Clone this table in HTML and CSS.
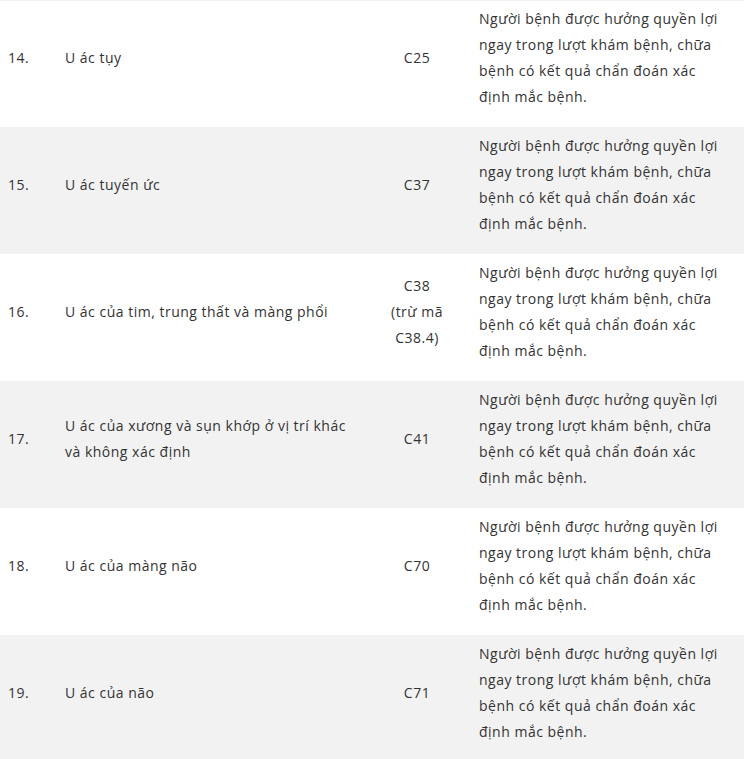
FILE: index.html
```html
<!DOCTYPE html>
<html lang="vi">
<head>
<meta charset="utf-8">
<link rel="stylesheet" href="styles.css">
</head>
<body>
<table class="tbl">
  <colgroup>
    <col class="c-num"><col class="c-name"><col class="c-code"><col class="c-note">
  </colgroup>
  <tbody>
    <tr class="row white first">
      <td>14.</td><td>U ác tụy</td><td class="code">C25</td>
      <td class="note">Người bệnh được hưởng quyền lợi ngay trong lượt khám bệnh, chữa bệnh có kết quả chẩn đoán xác định mắc bệnh.</td>
    </tr>
    <tr class="row gray">
      <td>15.</td><td>U ác tuyến ức</td><td class="code">C37</td>
      <td class="note">Người bệnh được hưởng quyền lợi ngay trong lượt khám bệnh, chữa bệnh có kết quả chẩn đoán xác định mắc bệnh.</td>
    </tr>
    <tr class="row white">
      <td>16.</td><td>U ác của tim, trung thất và màng phổi</td><td class="code">C38<br>(trừ mã C38.4)</td>
      <td class="note">Người bệnh được hưởng quyền lợi ngay trong lượt khám bệnh, chữa bệnh có kết quả chẩn đoán xác định mắc bệnh.</td>
    </tr>
    <tr class="row gray">
      <td>17.</td><td>U ác của xương và sụn khớp ở vị trí khác và không xác định</td><td class="code">C41</td>
      <td class="note">Người bệnh được hưởng quyền lợi ngay trong lượt khám bệnh, chữa bệnh có kết quả chẩn đoán xác định mắc bệnh.</td>
    </tr>
    <tr class="row white">
      <td>18.</td><td>U ác của màng não</td><td class="code">C70</td>
      <td class="note">Người bệnh được hưởng quyền lợi ngay trong lượt khám bệnh, chữa bệnh có kết quả chẩn đoán xác định mắc bệnh.</td>
    </tr>
    <tr class="row gray">
      <td>19.</td><td>U ác của não</td><td class="code">C71</td>
      <td class="note">Người bệnh được hưởng quyền lợi ngay trong lượt khám bệnh, chữa bệnh có kết quả chẩn đoán xác định mắc bệnh.</td>
    </tr>
  </tbody>
</table>
</body>
</html>
```

FILE: styles.css
```css
html, body {
  margin: 0;
  padding: 0;
  background: #ffffff;
}
.tbl {
  width: 744px;
  table-layout: fixed;
  border-collapse: collapse;
  border-top: 1px solid #f2f2f2;
  font-family: "Open Sans", "Noto Sans", sans-serif;
  font-size: 14px;
  letter-spacing: 0.5px;
  line-height: 26px;
  color: #333333;
}
.c-num { width: 57px; }
.c-name { width: 306px; }
.c-code { width: 108px; }
.c-note { width: 273px; }
.tbl td {
  padding: 6px 8px 17px 8px;
  vertical-align: middle;
  text-align: left;
}
.tbl td.note { padding-right: 20px; }
.tbl .row.first td { padding-top: 5px; }
.tbl td.code { text-align: center; }
.row.gray { background: #f2f2f2; }
.row.white { background: #ffffff; }
```
